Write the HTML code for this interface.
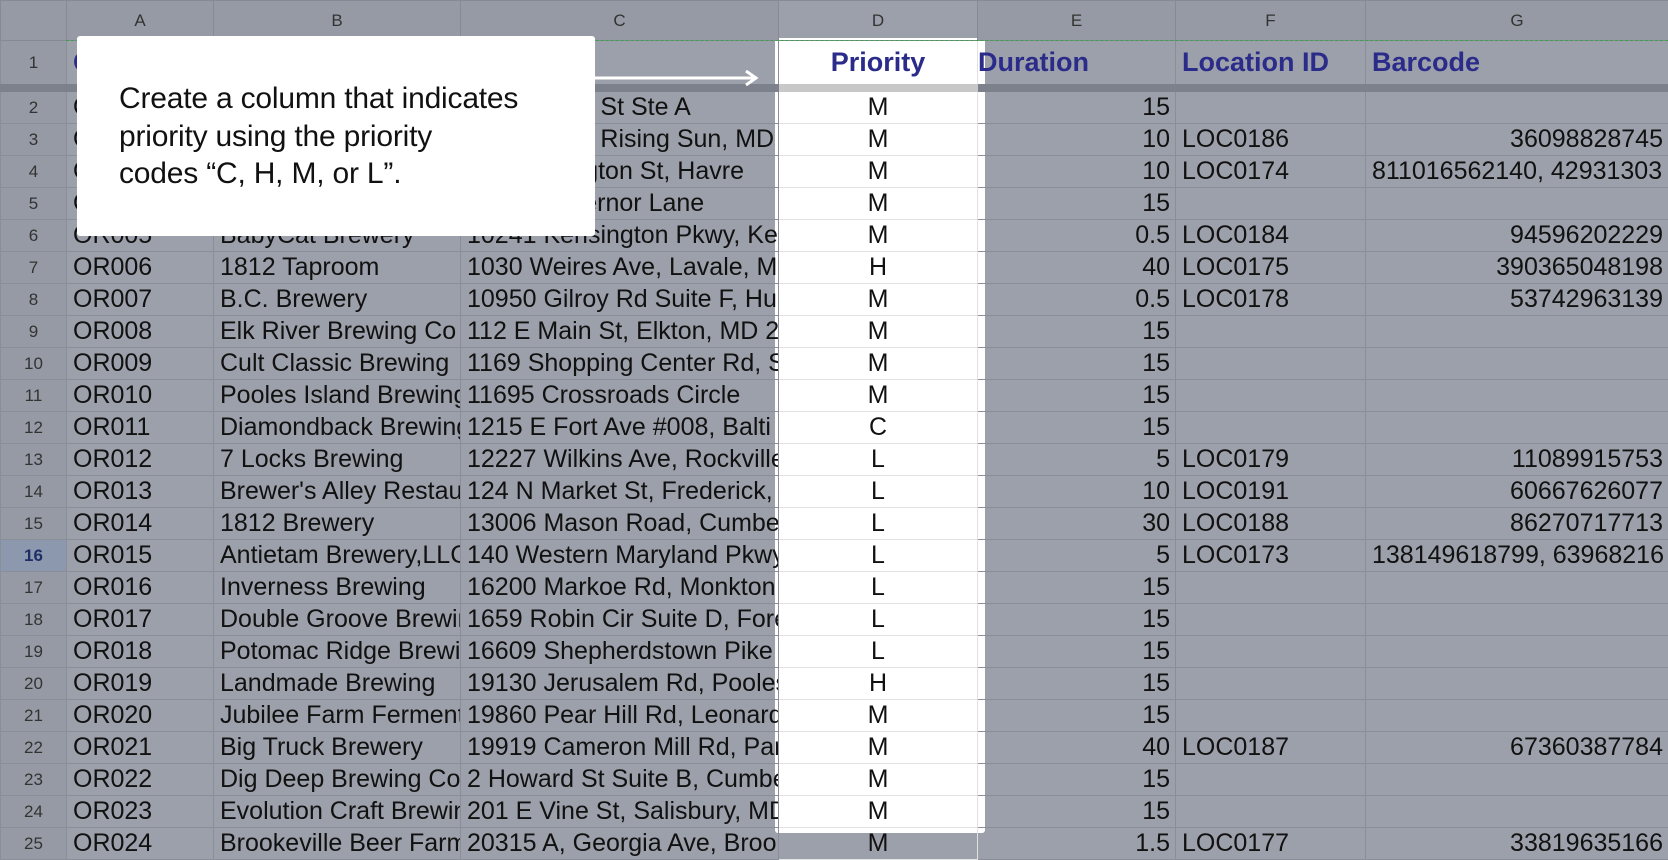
<!DOCTYPE html>
<html><head><meta charset="utf-8"><style>
body{margin:0;width:1668px;height:842px;overflow:hidden;background:#9ca0aa;font-family:"Liberation Sans",Arial,sans-serif;position:relative}
table{position:absolute;left:0;top:0;width:1668px;border-collapse:collapse;table-layout:fixed;z-index:2}
td{border:1px solid #8a8e99;height:31px;padding:0 6px;white-space:nowrap;overflow:hidden;font-size:25px;color:#111;line-height:31px}
tr.h td{height:39px;background:#959aa4;text-align:center;font-size:17px;color:#333;border-color:#868a95}
tr.r1 td{height:43px;border-bottom:8px solid #7d818b;font-weight:bold;color:#2b2b8a;font-size:27px}
td.n{text-align:center;font-size:17px;color:#333;background:#959aa4;padding:0}
td.sel{background:#8c98ae;color:#1f2f66;font-weight:bold}
td.d{text-align:center;border-color:#e2e2e2}
td.r{text-align:right;padding-right:5px}
#white{position:absolute;left:775px;top:38px;width:210px;height:795px;background:#fff;z-index:1;border-radius:3px}
#dash{position:absolute;left:66px;top:40px;width:1602px;border-top:1px dashed #3aa04a;z-index:3}
#call{position:absolute;left:77px;top:36px;width:518px;height:200px;background:#fff;z-index:5;border-radius:3px}
#call p{margin:0;position:absolute;left:42px;top:44px;font-size:30px;line-height:37.5px;color:#111;letter-spacing:-0.2px}
#arrow{position:absolute;left:594px;top:70px;z-index:5}
</style></head><body>
<div id="white"></div>
<div id="dash"></div>
<table>
<colgroup><col style="width:66px"><col style="width:147px"><col style="width:247px"><col style="width:318px"><col style="width:199px"><col style="width:198px"><col style="width:190px"><col style="width:303px"></colgroup>
<tr class="h"><td></td><td>A</td><td>B</td><td>C</td><td style="background:transparent">D</td><td>E</td><td>F</td><td>G</td></tr>
<tr class="r1"><td class="n" style="font-weight:normal;color:#333;font-size:17px">1</td><td>Order ID</td><td>Customer</td><td>Address</td><td class="d" style="border-bottom-color:#c8c8c8">Priority</td><td style="padding-left:0">Duration</td><td>Location ID</td><td>Barcode</td></tr>
<tr><td class="n">2</td><td>OR001</td><td>Brewery One</td><td>123 S Main St Ste A</td><td class="d">M</td><td class="r">15</td><td></td><td></td></tr>
<tr><td class="n">3</td><td>OR002</td><td>Brewery Two</td><td>24 Main St, Rising Sun, MD</td><td class="d">M</td><td class="r">10</td><td>LOC0186</td><td class="r">36098828745</td></tr>
<tr><td class="n">4</td><td>OR003</td><td>Brewery Three</td><td>40 Washington St, Havre</td><td class="d">M</td><td class="r">10</td><td>LOC0174</td><td>811016562140, 42931303</td></tr>
<tr><td class="n">5</td><td>OR004</td><td>Brewery Four</td><td>1 The Governor Lane</td><td class="d">M</td><td class="r">15</td><td></td><td></td></tr>
<tr><td class="n">6</td><td>OR005</td><td>BabyCat Brewery</td><td>10241 Kensington Pkwy, Ke</td><td class="d">M</td><td class="r">0.5</td><td>LOC0184</td><td class="r">94596202229</td></tr>
<tr><td class="n">7</td><td>OR006</td><td>1812 Taproom</td><td>1030 Weires Ave, Lavale, M</td><td class="d">H</td><td class="r">40</td><td>LOC0175</td><td class="r">390365048198</td></tr>
<tr><td class="n">8</td><td>OR007</td><td>B.C. Brewery</td><td>10950 Gilroy Rd Suite F, Hu</td><td class="d">M</td><td class="r">0.5</td><td>LOC0178</td><td class="r">53742963139</td></tr>
<tr><td class="n">9</td><td>OR008</td><td>Elk River Brewing Co</td><td>112 E Main St, Elkton, MD 2</td><td class="d">M</td><td class="r">15</td><td></td><td></td></tr>
<tr><td class="n">10</td><td>OR009</td><td>Cult Classic Brewing</td><td>1169 Shopping Center Rd, S</td><td class="d">M</td><td class="r">15</td><td></td><td></td></tr>
<tr><td class="n">11</td><td>OR010</td><td>Pooles Island Brewing</td><td>11695 Crossroads Circle</td><td class="d">M</td><td class="r">15</td><td></td><td></td></tr>
<tr><td class="n">12</td><td>OR011</td><td>Diamondback Brewing</td><td>1215 E Fort Ave #008, Balti</td><td class="d">C</td><td class="r">15</td><td></td><td></td></tr>
<tr><td class="n">13</td><td>OR012</td><td>7 Locks Brewing</td><td>12227 Wilkins Ave, Rockville</td><td class="d">L</td><td class="r">5</td><td>LOC0179</td><td class="r">11089915753</td></tr>
<tr><td class="n">14</td><td>OR013</td><td>Brewer's Alley Restaurant</td><td>124 N Market St, Frederick,</td><td class="d">L</td><td class="r">10</td><td>LOC0191</td><td class="r">60667626077</td></tr>
<tr><td class="n">15</td><td>OR014</td><td>1812 Brewery</td><td>13006 Mason Road, Cumberland</td><td class="d">L</td><td class="r">30</td><td>LOC0188</td><td class="r">86270717713</td></tr>
<tr><td class="n sel">16</td><td>OR015</td><td>Antietam Brewery,LLC</td><td>140 Western Maryland Pkwy</td><td class="d">L</td><td class="r">5</td><td>LOC0173</td><td>138149618799, 63968216</td></tr>
<tr><td class="n">17</td><td>OR016</td><td>Inverness Brewing</td><td>16200 Markoe Rd, Monkton</td><td class="d">L</td><td class="r">15</td><td></td><td></td></tr>
<tr><td class="n">18</td><td>OR017</td><td>Double Groove Brewing</td><td>1659 Robin Cir Suite D, Forest</td><td class="d">L</td><td class="r">15</td><td></td><td></td></tr>
<tr><td class="n">19</td><td>OR018</td><td>Potomac Ridge Brewing</td><td>16609 Shepherdstown Pike</td><td class="d">L</td><td class="r">15</td><td></td><td></td></tr>
<tr><td class="n">20</td><td>OR019</td><td>Landmade Brewing</td><td>19130 Jerusalem Rd, Poolesville</td><td class="d">H</td><td class="r">15</td><td></td><td></td></tr>
<tr><td class="n">21</td><td>OR020</td><td>Jubilee Farm Fermentation</td><td>19860 Pear Hill Rd, Leonardtown</td><td class="d">M</td><td class="r">15</td><td></td><td></td></tr>
<tr><td class="n">22</td><td>OR021</td><td>Big Truck Brewery</td><td>19919 Cameron Mill Rd, Parkton</td><td class="d">M</td><td class="r">40</td><td>LOC0187</td><td class="r">67360387784</td></tr>
<tr><td class="n">23</td><td>OR022</td><td>Dig Deep Brewing Co</td><td>2 Howard St Suite B, Cumberland</td><td class="d">M</td><td class="r">15</td><td></td><td></td></tr>
<tr><td class="n">24</td><td>OR023</td><td>Evolution Craft Brewing</td><td>201 E Vine St, Salisbury, MD</td><td class="d">M</td><td class="r">15</td><td></td><td></td></tr>
<tr><td class="n">25</td><td>OR024</td><td>Brookeville Beer Farm</td><td>20315 A, Georgia Ave, Brookeville</td><td class="d">M</td><td class="r">1.5</td><td>LOC0177</td><td class="r">33819635166</td></tr>
</table>
<div id="call"><p>Create a column that indicates<br>priority using the priority<br>codes “C, H, M, or L”.</p></div>
<svg id="arrow" width="170" height="20" viewBox="0 0 170 20"><path d="M0 8 H160 M152 1 L162 8 L152 15" stroke="#fff" stroke-width="3" fill="none"/></svg>
</body></html>
